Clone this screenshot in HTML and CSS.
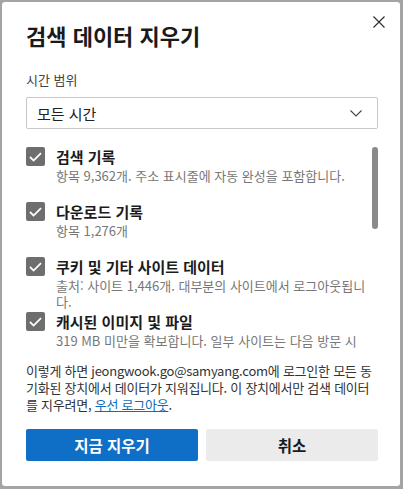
FILE: index.html
```html
<!DOCTYPE html>
<html lang="ko">
<head>
  <meta charset="UTF-8" />
  <meta name="viewport" content="width=device-width, initial-scale=1.0"/>
  <title>검색 데이터 지우기</title>
  <link rel="stylesheet" href="styles.css">
</head>
<body>
  <div class="dialog">
    <button class="close" aria-label="닫기">
      <svg width="12" height="12" viewBox="0 0 12 12"><path d="M0.5 0.5 L11.5 11.5 M11.5 0.5 L0.5 11.5" stroke="#2b2b2b" stroke-width="1.1" fill="none"/></svg>
    </button>

    <h2>검색 데이터 지우기</h2>

    <label class="range-label">시간 범위</label>
    <div class="select">
      <span>모든 시간</span>
      <svg width="12" height="7" viewBox="0 0 12 7"><path d="M0.5 0.5 L6 6 L11.5 0.5" stroke="#444" stroke-width="1.1" fill="none"/></svg>
    </div>

    <div class="scroll-area">
      <div class="list">
        <div class="item">
          <span class="check"><svg width="13" height="10" viewBox="0 0 13 10"><path d="M1 5 L4.6 8.6 L12 1.2" stroke="#fff" stroke-width="1.8" fill="none"/></svg></span>
          <div>
            <div class="item-title">검색 기록</div>
            <div class="item-sub">항목 9,362개. 주소 표시줄에 자동 완성을 포함합니다.</div>
          </div>
        </div>
        <div class="item">
          <span class="check"><svg width="13" height="10" viewBox="0 0 13 10"><path d="M1 5 L4.6 8.6 L12 1.2" stroke="#fff" stroke-width="1.8" fill="none"/></svg></span>
          <div>
            <div class="item-title">다운로드 기록</div>
            <div class="item-sub">항목 1,276개</div>
          </div>
        </div>
        <div class="item">
          <span class="check"><svg width="13" height="10" viewBox="0 0 13 10"><path d="M1 5 L4.6 8.6 L12 1.2" stroke="#fff" stroke-width="1.8" fill="none"/></svg></span>
          <div>
            <div class="item-title">쿠키 및 기타 사이트 데이터</div>
            <div class="item-sub">출처: 사이트 1,446개. 대부분의 사이트에서 로그아웃됩니다.</div>
          </div>
        </div>
        <div class="item">
          <span class="check"><svg width="13" height="10" viewBox="0 0 13 10"><path d="M1 5 L4.6 8.6 L12 1.2" stroke="#fff" stroke-width="1.8" fill="none"/></svg></span>
          <div>
            <div class="item-title">캐시된 이미지 및 파일</div>
            <div class="item-sub">319 MB 미만을 확보합니다. 일부 사이트는 다음 방문 시 로드 속도가 느려질 수 있습니다.</div>
          </div>
        </div>
      </div>
      <div class="scrollbar"><div class="thumb"></div></div>
    </div>

    <p class="note">이렇게 하면 jeongwook.go@samyang.com에 로그인한 모든 동기화된 장치에서 데이터가 지워집니다. 이 장치에서만 검색 데이터를 지우려면, <a href="#">우선 로그아웃</a>.</p>

    <div class="btn-group">
      <button class="btn primary">지금 지우기</button>
      <button class="btn">취소</button>
    </div>
  </div>
</body>
</html>
```

FILE: styles.css
```css
body {
  margin: 0;
  padding: 2px 3px 3px 2px;
  background-color: #a4a4a4;
  font-family: "Noto Sans CJK KR", "Noto Sans", sans-serif;
}

.dialog {
  position: relative;
  height: 484px;
  box-sizing: border-box;
  background-color: #ffffff;
  border-radius: 3px;
  padding: 19px 22px 0 24px;
}

.close {
  position: absolute;
  top: 12px;
  right: 13px;
  width: 16px;
  height: 16px;
  padding: 2px;
  border: none;
  background: none;
}

h2 {
  margin: 0;
  font-size: 22px;
  line-height: 28px;
  font-weight: bold;
  color: #1a1a1a;
}

.range-label {
  display: block;
  margin-top: 22px;
  font-size: 13px;
  line-height: 18px;
  color: #444;
}

.select {
  margin-top: 8px;
  height: 32px;
  box-sizing: border-box;
  border: 1px solid #c8c8c8;
  border-radius: 2px;
  padding: 0 15px 0 10px;
  display: flex;
  align-items: center;
  justify-content: space-between;
  font-size: 15px;
  color: #222;
}

.scroll-area {
  margin-top: 18px;
  height: 203px;
  overflow: hidden;
  display: flex;
}

.list {
  flex: 1;
  padding-right: 5px;
}

.item {
  display: flex;
  gap: 11px;
  min-height: 55px;
}

.check {
  flex: none;
  width: 19px;
  height: 19px;
  border-radius: 2px;
  background-color: #6e6e6e;
  display: flex;
  align-items: center;
  justify-content: center;
}

.item-title {
  font-size: 15px;
  line-height: 20px;
  font-weight: bold;
  color: #1b1b1b;
}

.item-sub {
  margin-top: 1px;
  font-size: 13px;
  line-height: 16px;
  color: #777;
}

.scrollbar {
  width: 6px;
}

.thumb {
  height: 82px;
  border-radius: 3px;
  background-color: #8a8a8a;
}

.note {
  margin: 12px 0 0;
  padding-right: 2px;
  font-size: 13px;
  line-height: 17px;
  letter-spacing: -0.25px;
  color: #333;
}

.note a {
  color: #0f6cbd;
}

.btn-group {
  margin-top: 16px;
  display: flex;
  gap: 8px;
}

.btn {
  flex: 1;
  height: 32px;
  border: none;
  border-radius: 2px;
  background-color: #ebebeb;
  color: #1b1b1b;
  font-family: inherit;
  font-size: 15.5px;
  font-weight: bold;
}

.btn.primary {
  background-color: #0f6ec6;
  color: #ffffff;
}
```
